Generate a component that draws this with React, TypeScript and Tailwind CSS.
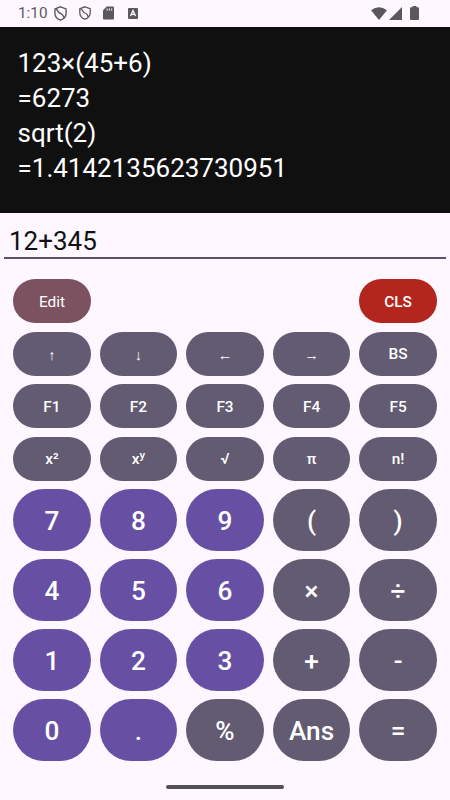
import clsx from 'clsx';

type KeyDef = {
  label: string;
  sup?: string;
  tone?: 'edit' | 'clear' | 'arrow';
};

const functionRows: (KeyDef | null)[][] = [
  [{ label: 'Edit', tone: 'edit' }, null, null, null, { label: 'CLS', tone: 'clear' }],
  [
    { label: '↑', tone: 'arrow' },
    { label: '↓', tone: 'arrow' },
    { label: '←', tone: 'arrow' },
    { label: '→', tone: 'arrow' },
    { label: 'BS' },
  ],
  [{ label: 'F1' }, { label: 'F2' }, { label: 'F3' }, { label: 'F4' }, { label: 'F5' }],
  [{ label: 'x²' }, { label: 'x', sup: 'y' }, { label: '√' }, { label: 'π' }, { label: 'n!' }],
];

const mainRows = [
  ['7', '8', '9', '(', ')'],
  ['4', '5', '6', '×', '÷'],
  ['1', '2', '3', '+', '-'],
  ['0', '.', '%', 'Ans', '='],
];

const history = ['123×(45+6)', '=6273', 'sqrt(2)', '=1.4142135623730951'];

function Shield({ className }: { className: string }) {
  return (
    <svg viewBox="0 0 12 14" className={className} fill="none" stroke="#5b585d" strokeWidth="1.3">
      <path d="M6 .8 11.2 2.7v4c0 3-2.1 5.4-5.2 6.5C2.9 12.1.8 9.7.8 6.7v-4L6 .8Z" />
      <path d="M1.5 2.8C4 3.4 3.2 6.2 6 7c2.8.8 2.4 2.8 3.4 4" />
    </svg>
  );
}

function StatusBar() {
  return (
    <div className="flex h-[26.5px] items-center pl-[18px] pr-[31px] text-[#5b585d]">
      <span className="w-[30px] text-[15.3px] leading-none">1:10</span>
      <Shield className="ml-[6px] h-[15px] w-[13px]" />
      <Shield className="ml-[12px] h-[14px] w-[12px]" />
      <svg viewBox="0 0 12 14" className="ml-[12px] h-[14px] w-[11px]" fill="currentColor">
        <path d="M4 0h7q1 0 1 1v12q0 1-1 1H1q-1 0-1-1V4Z" />
        <path d="M4.5 2v2.5M7 2v2.5M9.5 2v2.5" stroke="#fef7ff" strokeWidth="1" />
      </svg>
      <svg viewBox="0 0 10 11" className="ml-[14px] h-[11px] w-[10px]">
        <rect width="10" height="11" rx="1" fill="currentColor" />
        <path d="M2.5 8 5 2.5 7.5 8M3.5 6.3h3" fill="none" stroke="#fef7ff" strokeWidth="1.3" />
      </svg>
      <svg viewBox="0 0 16 13" className="ml-auto h-[13px] w-[16px]" fill="currentColor">
        <path d="M0 3.2Q8-2.8 16 3.2L8 13Z" />
      </svg>
      <svg viewBox="0 0 13 13" className="ml-[2px] h-[13px] w-[13px]" fill="currentColor">
        <path d="M13 0v13H0Z" />
      </svg>
      <svg viewBox="0 0 9 14" className="ml-[8px] h-[14px] w-[9px]" fill="currentColor">
        <path d="M2.5 0h4v1.3H8q1 0 1 1V13q0 1-1 1H1q-1 0-1-1V2.3q0-1 1-1h1.5Z" />
      </svg>
    </div>
  );
}

function FunctionKey({ label, sup, tone }: KeyDef) {
  return (
    <button
      className={clsx(
        'flex h-[44px] items-center justify-center rounded-full leading-none text-white',
        tone === 'arrow' ? 'pt-[4px] text-[14.5px]' : 'pt-[2px] text-[15.4px]',
        tone === 'edit' && 'bg-[#7d5260] font-normal',
        tone === 'clear' && 'bg-[#b3261e] font-medium',
        tone === 'arrow' && 'bg-[#625b71] font-normal',
        !tone && 'bg-[#625b71] font-medium',
      )}
    >
      {label}
      {sup && <span className="-mt-[8px] text-[11.5px]">{sup}</span>}
    </button>
  );
}

function MainKey({ label }: { label: string }) {
  const isDigit = /^[0-9.]$/.test(label);
  return (
    <button
      className={clsx(
        'flex h-[61.5px] items-center justify-center rounded-full pt-[2px] text-[26.2px] font-medium leading-none text-white',
        isDigit ? 'bg-[#6750a4]' : 'bg-[#625b71]',
      )}
    >
      {label}
    </button>
  );
}

export default function App() {
  return (
    <main className="flex h-[800px] w-[450px] flex-col overflow-hidden bg-[#fef7ff] font-['Roboto',sans-serif]">
      <StatusBar />

      <section className="h-[186.5px] bg-[#101010] px-[17.5px] pt-[19.5px] text-[26px] leading-[35px] text-white">
        {history.map((line) => (
          <div key={line}>{line}</div>
        ))}
      </section>

      <div className="mx-[4px] h-[46px] border-b-2 border-[#5a5168] pl-[5px] pt-[11px] text-[26px] leading-[35px] text-[#111111]">
        12+345
      </div>

      <section className="flex flex-col gap-[8.5px] px-[13.3px] pt-[20.3px]">
        {functionRows.map((row, i) => (
          <div key={i} className="grid grid-cols-5 gap-[9.3px]">
            {row.map((item, j) => (item ? <FunctionKey key={j} {...item} /> : <div key={j} />))}
          </div>
        ))}
        {mainRows.map((row) => (
          <div key={row[0]} className="grid grid-cols-5 gap-[9.3px]">
            {row.map((label) => (
              <MainKey key={label} label={label} />
            ))}
          </div>
        ))}
      </section>

      <div className="mx-auto mb-[11px] mt-auto h-[4px] w-[118px] rounded-full bg-[#535156]" />
    </main>
  );
}
